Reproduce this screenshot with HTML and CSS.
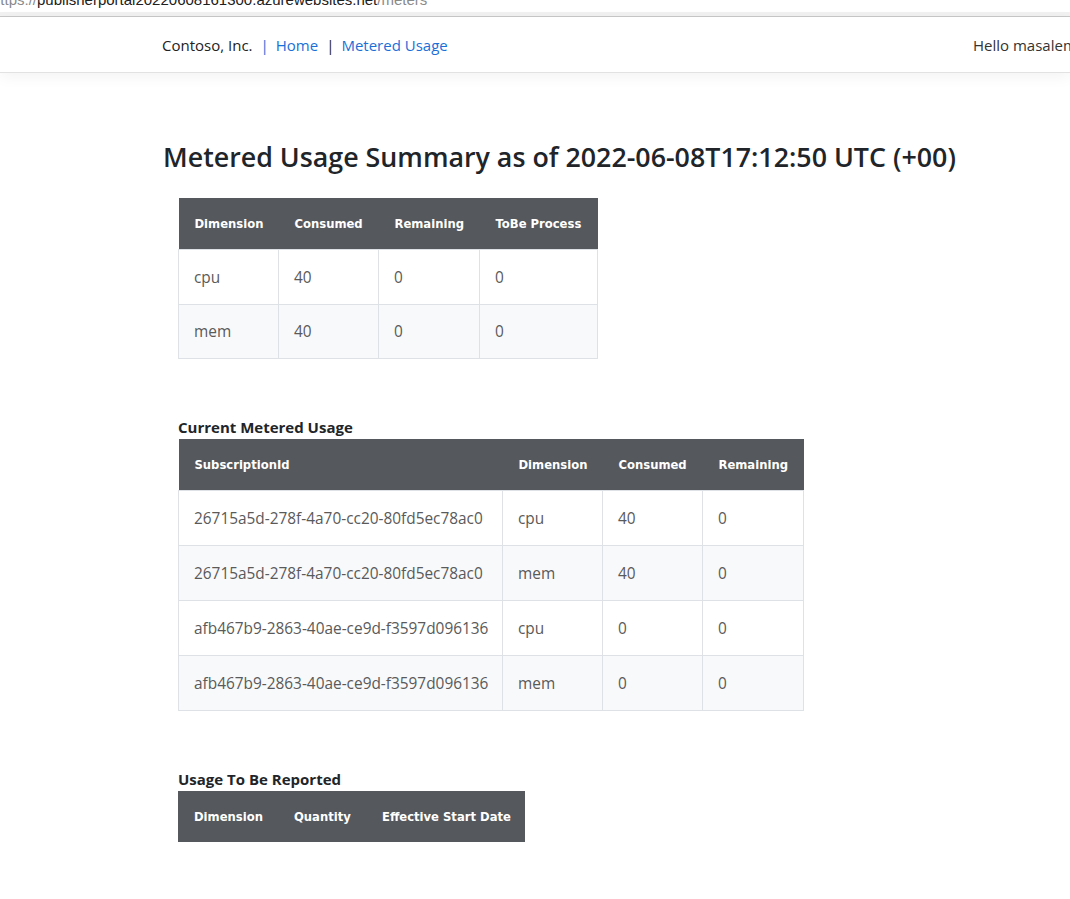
FILE: index.html
```html
<!DOCTYPE html>
<html lang="en">
<head>
<meta charset="utf-8">
<title>Metered Usage</title>
<link rel="stylesheet" href="styles.css">
</head>
<body>
<div class="urlbar"><span class="url-scheme">https://</span><span class="url-host">publisherportal20220608161300.azurewebsites.net</span><span class="url-path">/meters</span></div>
<div class="urlgap"></div>
<header class="navbar">
  <div class="nav-left">
    <span class="brand">Contoso, Inc.</span>
    <span class="sep sep-blue">|</span>
    <a class="nav-link" href="#">Home</a>
    <span class="sep">|</span>
    <a class="nav-link" href="#">Metered Usage</a>
  </div>
  <div class="nav-right">Hello masalem@microsoft.com!</div>
</header>
<main class="content">
  <h1 class="title">Metered Usage Summary as of 2022-06-08T17:12:50 UTC (+00)</h1>

  <table class="grid t1">
    <colgroup><col class="w100"><col class="w100"><col class="w101"><col class="w118"></colgroup>
    <thead><tr><th>Dimension</th><th>Consumed</th><th>Remaining</th><th>ToBe Process</th></tr></thead>
    <tbody>
      <tr><td>cpu</td><td>40</td><td>0</td><td>0</td></tr>
      <tr><td>mem</td><td>40</td><td>0</td><td>0</td></tr>
    </tbody>
  </table>

  <div class="section-label">Current Metered Usage</div>
  <table class="grid t2">
    <colgroup><col class="w324"><col class="w100"><col class="w100"><col class="w101"></colgroup>
    <thead><tr><th>SubscriptionId</th><th>Dimension</th><th>Consumed</th><th>Remaining</th></tr></thead>
    <tbody>
      <tr><td>26715a5d-278f-4a70-cc20-80fd5ec78ac0</td><td>cpu</td><td>40</td><td>0</td></tr>
      <tr><td>26715a5d-278f-4a70-cc20-80fd5ec78ac0</td><td>mem</td><td>40</td><td>0</td></tr>
      <tr><td>afb467b9-2863-40ae-ce9d-f3597d096136</td><td>cpu</td><td>0</td><td>0</td></tr>
      <tr><td>afb467b9-2863-40ae-ce9d-f3597d096136</td><td>mem</td><td>0</td><td>0</td></tr>
    </tbody>
  </table>

  <div class="section-label">Usage To Be Reported</div>
  <table class="grid t3">
    <colgroup><col class="w100"><col class="w88"><col class="w159"></colgroup>
    <thead><tr><th>Dimension</th><th>Quantity</th><th>Effective Start Date</th></tr></thead>
    <tbody></tbody>
  </table>
</main>
</body>
</html>
```

FILE: styles.css
```css
html, body {
  margin: 0;
  padding: 0;
  background: #ffffff;
  overflow: hidden;
}

body {
  font-family: "Open Sans", "Noto Sans", "Liberation Sans", sans-serif;
  color: #212529;
}

.urlbar {
  height: 12px;
  overflow: hidden;
  white-space: nowrap;
  font-family: "Liberation Sans", sans-serif;
  font-size: 15px;
  line-height: 12px;
  margin-left: -8px;
}

.urlbar span {
  position: relative;
  top: -6px;
}

.url-scheme, .url-path { color: #8a8a8a; }
.url-host { color: #202020; }

.urlgap {
  height: 4px;
  background: #f1f1f1;
  border-bottom: 1px solid #c8c8c8;
}

.navbar {
  height: 55px;
  display: flex;
  align-items: center;
  border-bottom: 1px solid #e2e2e2;
  box-shadow: 0 4px 14px rgba(0, 0, 0, 0.05);
  padding-left: 162px;
  white-space: nowrap;
  overflow: hidden;
  font-size: 15px;
}

.nav-left {
  display: flex;
  align-items: center;
  width: 811px;
  flex: none;
}

.brand { color: #222; }

.sep {
  color: #222;
  margin: 0 7px 0 8px;
}

.sep-blue { color: #1a6fd8; }

.nav-link {
  color: #1a6fd8;
  text-decoration: none;
}

.nav-right {
  color: #333;
  flex: none;
}

.content {
  padding-left: 163px;
}

.title {
  margin: 68px 0 26px 0;
  font-size: 26.8px;
  line-height: 31px;
  font-weight: 600;
  color: #212529;
  white-space: nowrap;
}

.grid {
  margin-left: 15px;
  border-collapse: collapse;
  table-layout: fixed;
}

.w88 { width: 88px; }
.w100 { width: 100px; }
.w101 { width: 101px; }
.w118 { width: 118px; }
.w159 { width: 159px; }
.w324 { width: 324px; }

.t1 { width: 419px; }
.t2 { width: 625px; }
.t3 { width: 347px; }

.grid th {
  background: #55585d;
  color: #ffffff;
  font-family: "DejaVu Sans", "Verdana", sans-serif;
  font-weight: bold;
  font-size: 11.6px;
  text-align: left;
  height: 51px;
  padding: 0 0 0 16px;
  border: none;
  white-space: nowrap;
}

.grid td {
  height: 54px;
  padding: 0 0 0 15px;
  border: 1px solid #dee2e6;
  font-size: 15.4px;
  color: #5a5a5a;
  white-space: nowrap;
}

.t1 tbody tr:last-child td {
  height: 53px;
}

.grid tbody tr:nth-child(even) td {
  background: #f8f9fa;
}

.section-label {
  margin: 58px 0 2px 15px;
  font-size: 15px;
  line-height: 20px;
  font-weight: 700;
  color: #212529;
}
```
